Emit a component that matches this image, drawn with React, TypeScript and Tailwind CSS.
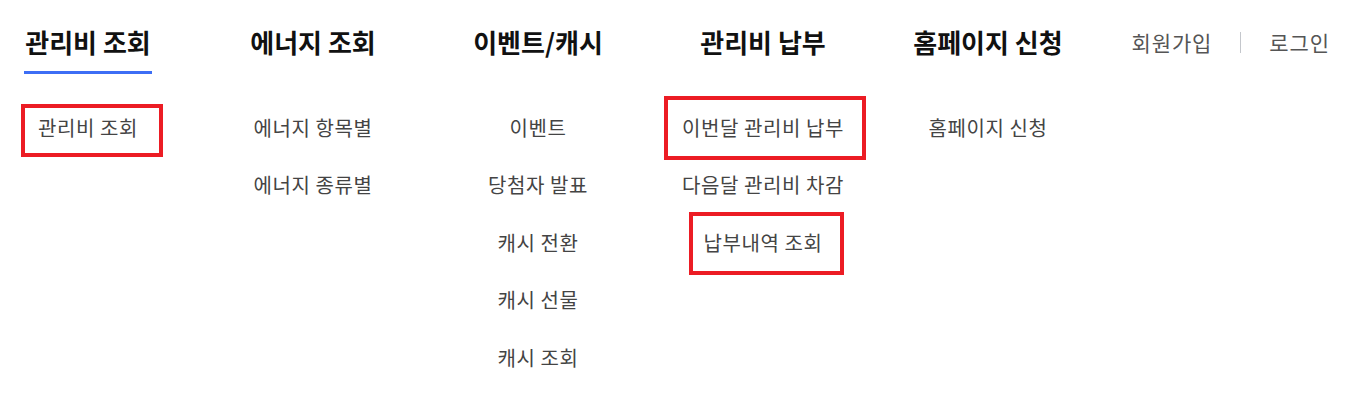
const font = { fontFamily: '"Noto Sans CJK KR", "Noto Sans", "Liberation Sans", sans-serif' };

type Item = { label: string; box?: string };
type Menu = { title: string; active?: boolean; items: Item[] };

const menus: Menu[] = [
  { title: "관리비 조회", active: true, items: [{ label: "관리비 조회", box: "left-[21px] right-[13px] top-[5px] bottom-0" }] },
  { title: "에너지 조회", items: [{ label: "에너지 항목별" }, { label: "에너지 종류별" }] },
  {
    title: "이벤트/캐시",
    items: [{ label: "이벤트" }, { label: "당첨자 발표" }, { label: "캐시 전환" }, { label: "캐시 선물" }, { label: "캐시 조회" }],
  },
  {
    title: "관리비 납부",
    items: [
      { label: "이번달 관리비 납부", box: "-left-[11px] -right-[15px] -top-[3px] -bottom-[3px]" },
      { label: "다음달 관리비 차감" },
      { label: "납부내역 조회", box: "left-[14px] right-[7px] -top-[2px] -bottom-[3px]" },
    ],
  },
  { title: "홈페이지 신청", items: [{ label: "홈페이지 신청" }] },
];

export default function App() {
  return (
    <div className="h-[417px] w-full overflow-hidden bg-white" style={font}>
      <header className="flex justify-between pr-[21px]">
        <nav className="grid grid-cols-[repeat(5,176px)] gap-x-[49px]">
          {menus.map((m) => (
            <div key={m.title} className="flex flex-col items-center">
              <a
                className={`inline-block border-b-[3px] px-px pt-[26px] pb-[13px] text-[26px] font-bold leading-[32px] text-[#111] ${
                  m.active ? "border-[#3d6ef5]" : "border-transparent"
                }`}
              >
                {m.title}
              </a>
              <ul className="mt-[25px] w-full">
                {m.items.map((it) => (
                  <li
                    key={it.label}
                    className="relative flex h-[57.5px] items-center justify-center text-[20px] tracking-[0.6px] text-[#444]"
                  >
                    {it.label}
                    {it.box && <span className={`pointer-events-none absolute border-[4px] border-[#ec1c24] ${it.box}`} />}
                  </li>
                ))}
              </ul>
            </div>
          ))}
        </nav>
        <div className="flex h-[84px] items-center gap-[28px] pt-[1px] text-[21px] tracking-[0.9px] text-[#555]">
          <a>회원가입</a>
          <span className="h-[21px] w-px bg-[#c4c7cc]" />
          <a>로그인</a>
        </div>
      </header>
    </div>
  );
}
